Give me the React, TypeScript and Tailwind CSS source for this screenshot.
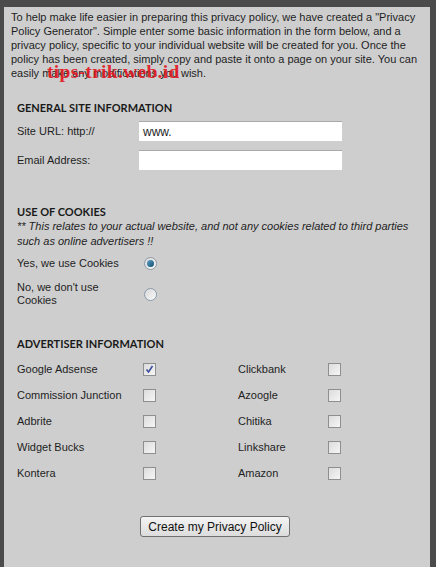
import type { ReactNode } from "react";

const advertisers: [string, boolean, string, boolean][] = [
  ["Google Adsense", true, "Clickbank", false],
  ["Commission Junction", false, "Azoogle", false],
  ["Adbrite", false, "Chitika", false],
  ["Widget Bucks", false, "Linkshare", false],
  ["Kontera", false, "Amazon", false],
];

function CheckBox({ checked }: { checked: boolean }) {
  return (
    <div className="relative h-[13px] w-[13px] border border-[#8e8f8f] bg-gradient-to-br from-[#dcdcdc] to-[#f6f6f6]">
      {checked && (
        <svg viewBox="0 0 11 11" className="absolute left-0 top-0 h-[11px] w-[11px]">
          <path d="M2.5 5.5 L4.5 8 L8.5 2" fill="none" stroke="#3c4c9a" strokeWidth="1.6" />
        </svg>
      )}
    </div>
  );
}

function Radio({ checked }: { checked: boolean }) {
  return (
    <div className="flex h-[13px] w-[13px] items-center justify-center rounded-full border border-[#8c9aa8] bg-gradient-to-br from-[#d8d8d8] to-[#fafafa]">
      {checked && (
        <div className="h-[7px] w-[7px] rounded-full bg-gradient-to-br from-[#5ba2c8] to-[#0f4d6e]" />
      )}
    </div>
  );
}

function Heading({ children }: { children: ReactNode }) {
  return (
    <div className="font-['Lato',sans-serif] text-[11px] font-bold leading-[14px] text-[#1a1a1a]">
      {children}
    </div>
  );
}

export default function App() {
  return (
    <div className="h-[567px] w-[436px] overflow-hidden bg-[#4b4b4b] pl-[4px] pr-[6px] pt-[7px] font-['Liberation_Sans',Arial,sans-serif] text-[#1e1e1e]">
      <div className="relative h-full bg-[#cecece] pl-[7px] pr-[8px] pt-[3px]">
        <p className="whitespace-nowrap text-[11px] leading-[14px]">
          To help make life easier in preparing this privacy policy, we have created a "Privacy
          <br />
          Policy Generator". Simple enter some basic information in the form below, and a
          <br />
          privacy policy, specific to your individual website will be created for you. Once the
          <br />
          policy has been created, simply copy and paste it onto a page on your site. You can
          <br />
          easily make any modifications you wish.
        </p>

        {/* watermark */}
        <div className="absolute left-[43px] top-[50px] font-['Liberation_Serif',serif] text-[19.5px] font-bold tracking-[0.3px] text-[#e3171f] opacity-90">
          tips-trik.web.id
        </div>

        <div className="pl-[6px] text-[11px]">
          {/* General */}
          <div className="mt-[21px]">
            <Heading>GENERAL SITE INFORMATION</Heading>
          </div>
          <div className="mt-[6px] flex h-[20px] items-center">
            <span className="w-[122px]">Site URL: http://</span>
            <div className="flex h-[20px] w-[203px] items-center border-t border-[#a9a9a9] bg-white pl-[4px] text-[12px]">
              www.
            </div>
          </div>
          <div className="mt-[9px] flex h-[20px] items-center">
            <span className="w-[122px]">Email Address:</span>
            <div className="h-[20px] w-[203px] border-t border-[#a9a9a9] bg-white" />
          </div>

          {/* Cookies */}
          <div className="mt-[35px]">
            <Heading>USE OF COOKIES</Heading>
          </div>
          <div className="text-[11px] italic leading-[15px]">
            ** This relates to your actual website, and not any cookies related to third parties
            <br />
            such as online advertisers !!
          </div>
          <div className="mt-[6px] flex h-[16px] items-center">
            <span className="w-[127px]">Yes, we use Cookies</span>
            <Radio checked />
          </div>
          <div className="mt-[10px] flex items-center">
            <span className="w-[127px] leading-[13px]">
              No, we don't use
              <br />
              Cookies
            </span>
            <Radio checked={false} />
          </div>

          {/* Advertisers */}
          <div className="mt-[30px]">
            <Heading>ADVERTISER INFORMATION</Heading>
          </div>
          <div className="mt-[10px] flex flex-col gap-[10px]">
            {advertisers.map(([a, ac, b, bc]) => (
              <div key={a} className="flex h-[16px] items-center">
                <span className="w-[126px]">{a}</span>
                <div className="w-[95px]">
                  <CheckBox checked={ac} />
                </div>
                <span className="w-[90px]">{b}</span>
                <CheckBox checked={bc} />
              </div>
            ))}
          </div>

          <div className="mt-[35px] pl-[123px]">
            <button className="flex h-[21px] w-[150px] items-center justify-center rounded-[3px] border border-[#707070] bg-gradient-to-b from-[#f4f4f4] to-[#dcdcdc] text-[12px] text-[#111]">
              Create my Privacy Policy
            </button>
          </div>
        </div>
      </div>
    </div>
  );
}
